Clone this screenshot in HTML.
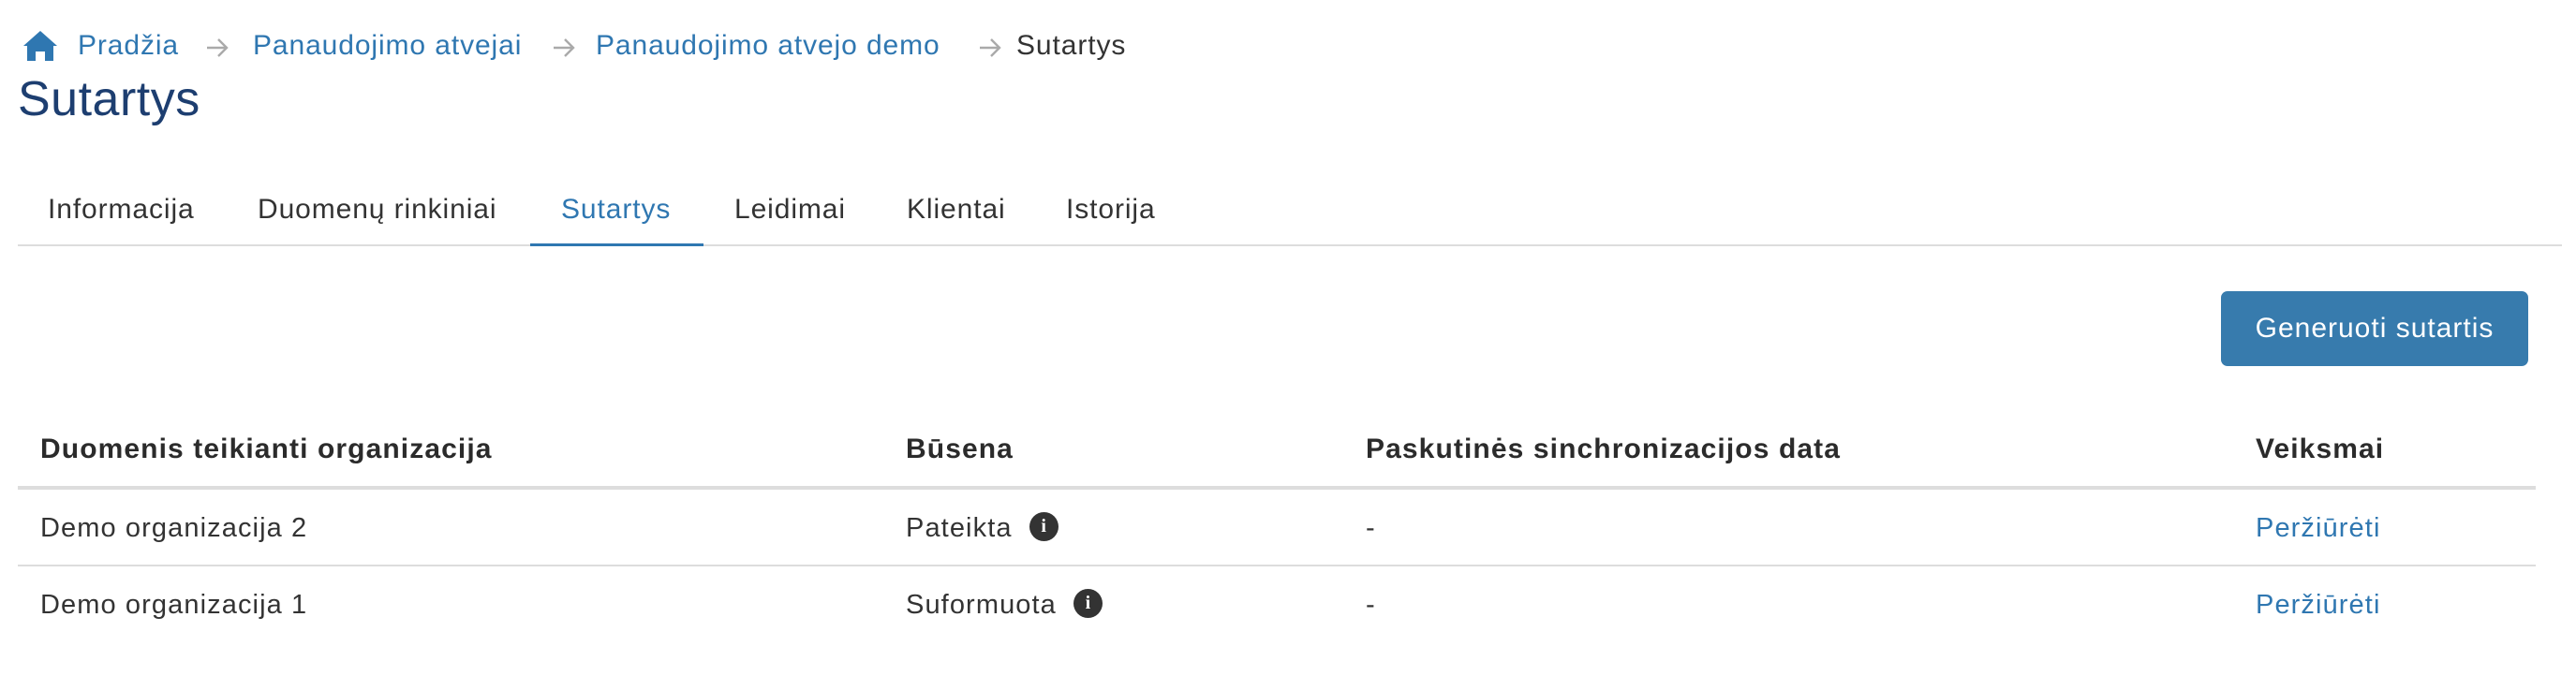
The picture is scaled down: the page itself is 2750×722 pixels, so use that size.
<!DOCTYPE html>
<html><head><meta charset="utf-8"><style>
*{margin:0;padding:0;box-sizing:border-box}
body{width:2750px;height:722px;background:#fff;font-family:"Liberation Sans",sans-serif;color:#333;position:relative;overflow:hidden;letter-spacing:0.6px}
.a{position:absolute;white-space:nowrap}
.bc{font-size:30px;top:32px;color:#2f77b1;letter-spacing:0.9px}
.tab{font-size:30px;top:207px;color:#333;letter-spacing:0.9px}
.th{font-size:30px;font-weight:bold;top:463px;color:#2b2b2b;letter-spacing:1.1px}
.td{font-size:29px;color:#333;letter-spacing:1.1px}
.info{display:inline-block;width:31px;height:31px;border-radius:50%;background:#333;color:#fff;font:bold 20px "Liberation Serif",serif;text-align:center;line-height:31px;vertical-align:middle;margin-left:18px;position:relative;top:-3px;letter-spacing:0}
.lnk{color:#2f77b1}
</style></head><body>
<svg class="a" style="left:24px;top:32px" width="38" height="34" viewBox="0 0 38 34"><path d="M19 1 L37 17 L33 17 L33 33 L24 33 L24 23 L14 23 L14 33 L5 33 L5 17 L1 17 Z" fill="#2f77b1"/></svg>
<div class="a bc" style="left:83px">Pradžia</div>
<svg class="a" style="left:219px;top:39px" width="26" height="24" viewBox="0 0 26 24"><path d="M2 12 H23 M14 3 L23 12 L14 21" fill="none" stroke="#aaa" stroke-width="2.4"/></svg>
<div class="a bc" style="left:270px">Panaudojimo atvejai</div>
<svg class="a" style="left:589px;top:39px" width="26" height="24" viewBox="0 0 26 24"><path d="M2 12 H23 M14 3 L23 12 L14 21" fill="none" stroke="#aaa" stroke-width="2.4"/></svg>
<div class="a bc" style="left:636px">Panaudojimo atvejo demo</div>
<svg class="a" style="left:1044px;top:39px" width="26" height="24" viewBox="0 0 26 24"><path d="M2 12 H23 M14 3 L23 12 L14 21" fill="none" stroke="#aaa" stroke-width="2.4"/></svg>
<div class="a bc" style="left:1085px;color:#333">Sutartys</div>
<div class="a" style="left:19px;top:76px;font-size:52px;color:#1d3e70;letter-spacing:0.5px">Sutartys</div>
<div class="a tab" style="left:51px">Informacija</div>
<div class="a tab" style="left:275px">Duomenų rinkiniai</div>
<div class="a tab" style="left:599px;color:#2f77b1">Sutartys</div>
<div class="a tab" style="left:784px">Leidimai</div>
<div class="a tab" style="left:968px">Klientai</div>
<div class="a tab" style="left:1138px">Istorija</div>
<div class="a" style="left:19px;top:261px;width:2716px;height:2px;background:#ddd"></div>
<div class="a" style="left:566px;top:260px;width:185px;height:3px;background:#2f77b1"></div>
<div class="a" style="left:2371px;top:311px;width:328px;height:80px;border-radius:7px;background:#377bad;color:#fff;font-size:30px;text-align:center;line-height:80px;letter-spacing:1px">Generuoti sutartis</div>
<div class="a th" style="left:43px">Duomenis teikianti organizacija</div>
<div class="a th" style="left:967px">Būsena</div>
<div class="a th" style="left:1458px">Paskutinės sinchronizacijos data</div>
<div class="a th" style="left:2408px">Veiksmai</div>
<div class="a" style="left:19px;top:519px;width:2688px;height:4px;background:#ddd"></div>
<div class="a td" style="left:43px;top:548px">Demo organizacija 2</div>
<div class="a td" style="left:967px;top:548px">Pateikta<span class="info">i</span></div>
<div class="a td" style="left:1458px;top:548px">-</div>
<div class="a td lnk" style="left:2408px;top:548px">Peržiūrėti</div>
<div class="a" style="left:19px;top:603px;width:2688px;height:2px;background:#ddd"></div>
<div class="a td" style="left:43px;top:630px">Demo organizacija 1</div>
<div class="a td" style="left:967px;top:630px">Suformuota<span class="info">i</span></div>
<div class="a td" style="left:1458px;top:630px">-</div>
<div class="a td lnk" style="left:2408px;top:630px">Peržiūrėti</div>
</body></html>
